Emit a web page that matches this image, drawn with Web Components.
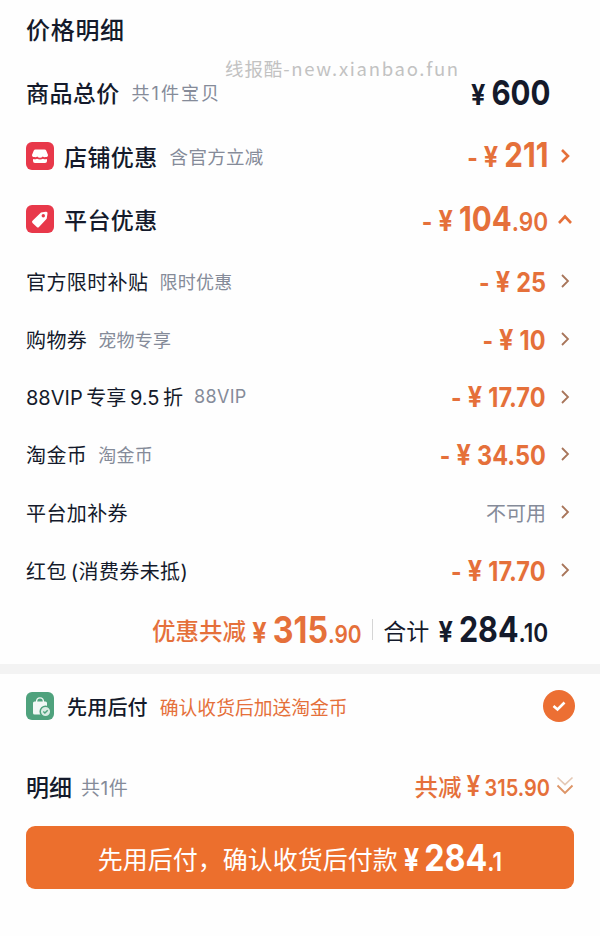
<!DOCTYPE html>
<html lang="zh">
<head>
<meta charset="utf-8">
<title>价格明细</title>
<style>
	html, body { margin: 0; background: #fefefe; }
	body { width: 600px; height: 936px; overflow: hidden; font-family: Inter, "Noto Sans CJK SC", sans-serif; color: #141a2b; position: relative; }
</style>
</head>
<body>
<price-panel>
	<section-title>价格明细</section-title>

	<price-row h="63" size="23" weight="500" note-size="18" lift="2" note-gap="12">
		商品总价<span slot="note" style="letter-spacing:2px">共1件宝贝</span>
		<money-amount slot="value" int="600" size="34" color="#141a2b" style="margin:3px -2px 0 0"></money-amount>
		<span slot="arrow"></span>
	</price-row>

	<price-row h="64" size="23" weight="500" note-size="18.5" note-gap="12">
		<app-icon slot="icon" name="shop"></app-icon>
		店铺优惠<span slot="note">含官方立减</span>
		<money-amount slot="value" sign int="211" size="34" style="margin-top:-3px"></money-amount>
		<chevron-icon slot="arrow" dir="right" strong></chevron-icon>
	</price-row>

	<price-row h="64" size="23" weight="500" lift="2">
		<app-icon slot="icon" name="tag"></app-icon>
		平台优惠
		<money-amount slot="value" sign int="104" dec=".90" size="34"></money-amount>
		<chevron-icon slot="arrow" dir="up" strong></chevron-icon>
	</price-row>

	<price-row h="58">
		官方限时补贴<span slot="note">限时优惠</span>
		<money-amount slot="value" sign int="25" size="27" style="margin-right:2px"></money-amount>
		<chevron-icon slot="arrow" dir="right"></chevron-icon>
	</price-row>
	<price-row h="58">
		购物券<span slot="note">宠物专享</span>
		<money-amount slot="value" sign int="10" size="27" style="margin-right:2px"></money-amount>
		<chevron-icon slot="arrow" dir="right"></chevron-icon>
	</price-row>
	<price-row h="57" tight>
		88VIP 专享 9.5 折<span slot="note">88VIP</span>
		<money-amount slot="value" sign int="17.70" size="27" style="margin-right:2px"></money-amount>
		<chevron-icon slot="arrow" dir="right"></chevron-icon>
	</price-row>
	<price-row h="58">
		淘金币<span slot="note">淘金币</span>
		<money-amount slot="value" sign int="34.50" size="27" style="margin-right:2px"></money-amount>
		<chevron-icon slot="arrow" dir="right"></chevron-icon>
	</price-row>
	<price-row h="58">
		平台加补券
		<span slot="value" style="color:#858b99;font-size:20px;margin-right:2px">不可用</span>
		<chevron-icon slot="arrow" dir="right"></chevron-icon>
	</price-row>
	<price-row h="58">
		红包 (消费券未抵)
		<money-amount slot="value" sign int="17.70" size="27" style="margin-right:2px"></money-amount>
		<chevron-icon slot="arrow" dir="right"></chevron-icon>
	</price-row>

	<total-bar>
		<money-amount slot="saved" int="315" dec=".90" dec-size="24" size="37"></money-amount>
		<money-amount slot="total" int="284" dec=".10" size="35" color="#141a2b"></money-amount>
	</total-bar>

	<pay-later-row></pay-later-row>

	<detail-summary>
		<money-amount int="315.90" size="23" yen-size="28" gap="5" weight="600"></money-amount>
	</detail-summary>

	<pay-button><money-amount int="284" dec=".1" size="37" yen-size="31" gap="6" color="#fff"></money-amount></pay-button>
</price-panel>
<water-mark>线报酷<span style="letter-spacing:1.7px">-new.xianbao.fun</span></water-mark>

<script>
const NARROW = 0.87;

function openShadow(el, html) {
	el.attachShadow({ mode: 'open' }).innerHTML = html;
}

class PricePanel extends HTMLElement {
	constructor() {
		super();
		openShadow(this, `<style>:host { display: flex; flex-direction: column; height: 936px; }</style><slot></slot>`);
	}
}

class SectionTitle extends HTMLElement {
	constructor() {
		super();
		openShadow(this, `<style>
			:host { display: flex; align-items: center; height: 61px; box-sizing: border-box; padding: 0 0 5px 26px; font-size: 24px; font-weight: 500; letter-spacing: .7px; }
		</style><slot></slot>`);
	}
}

class PriceRow extends HTMLElement {
	constructor() {
		super();
		const h = this.getAttribute('h') || 58;
		const size = this.getAttribute('size') || 20;
		const weight = this.getAttribute('weight') || 400;
		const noteSize = this.getAttribute('note-size') || 18;
		const noteGap = this.getAttribute('note-gap') || 11;
		const lift = this.getAttribute('lift') || 0;
		const spacing = this.hasAttribute('tight') ? 0 : 0.4;
		openShadow(this, `<style>
			:host { display: flex; align-items: center; height: ${h}px; padding: 0 26px ${lift}px; box-sizing: border-box; }
			.label { font-size: ${size}px; font-weight: ${weight}; letter-spacing: ${spacing}px; word-spacing: -2px; white-space: nowrap; }
			.note { font-size: ${noteSize}px; color: #858b99; margin-left: ${noteGap}px; letter-spacing: .3px; white-space: nowrap; }
			.value { margin-left: auto; display: flex; }
			.arrow { width: 26px; display: flex; justify-content: flex-end; }
			::slotted([slot=icon]) { margin-right: 10px; }
		</style>
		<slot name="icon"></slot>
		<span class="label"><slot></slot></span>
		<span class="note"><slot name="note"></slot></span>
		<span class="value"><slot name="value"></slot></span>
		<span class="arrow"><slot name="arrow"></slot></span>`);
	}
}

// digits are squeezed horizontally, the reference uses a narrow DIN-like face
class MoneyAmount extends HTMLElement {
	constructor() {
		super();
		const size = +this.getAttribute('size') || 26;
		const yen = +this.getAttribute('yen-size') || 29;
		const gap = +this.getAttribute('gap') || 7;
		const decSize = +this.getAttribute('dec-size') || 26;
		const weight = this.getAttribute('weight') || 700;
		const color = this.getAttribute('color') || '#e5703a';
		const sign = this.hasAttribute('sign') ? '<span class="sign">-</span>' : '';
		const dec = this.getAttribute('dec');
		openShadow(this, `<style>
			:host { display: inline-flex; color: ${color}; font-family: Inter, sans-serif; font-weight: ${weight}; white-space: nowrap; line-height: 1; }
			.inner { display: inline-flex; align-items: baseline; transform-origin: right center; }
			.sign { font-size: 26px; margin-right: 7px; }
			.yen { font-size: ${yen}px; margin-right: ${gap}px; }
			.int { font-size: ${size}px; }
			.dec { font-size: ${decSize}px; font-weight: 600; }
		</style><span class="inner">${sign}<span class="yen">¥</span><span class="int">${this.getAttribute('int')}</span>${dec ? `<span class="dec">${dec}</span>` : ''}</span>`);
	}

	connectedCallback() {
		const inner = this.shadowRoot.querySelector('.inner');
		const w = inner.getBoundingClientRect().width;
		inner.style.transform = `scaleX(${NARROW})`;
		inner.style.marginLeft = `${-w * (1 - NARROW)}px`;
	}
}

class ChevronIcon extends HTMLElement {
	constructor() {
		super();
		const dir = this.getAttribute('dir');
		const strong = this.hasAttribute('strong');
		const color = strong ? '#e5703a' : '#a8755a';
		const sw = strong ? 2.6 : 1.8;
		const svg = dir === 'up'
			? `<svg width="16" height="12" viewBox="0 0 16 12"><path d="M2 10 8 3.500 14 10" fill="none" stroke="${color}" stroke-width="${sw}"/></svg>`
			: `<svg width="10" height="16" viewBox="0 0 10 16"><path d="M2 2 8 8 2 14" fill="none" stroke="${color}" stroke-width="${sw}"/></svg>`;
		openShadow(this, `<style>:host { display: flex; margin-right: ${dir === 'up' ? 1 : 4}px; }</style>${svg}`);
	}
}

const ICONS = {
	shop: `<path d="M9.500 7.500h9a2 2 0 0 1 1.800 1.200L22 13a2 2 0 0 1-2.500 2 3 3 0 0 1-2.800-.6 3.500 3.500 0 0 1-5.400 0 3 3 0 0 1-2.800.6 2 2 0 0 1-2.500-2L7.700 8.700a2 2 0 0 1 1.800-1.200z" fill="#fff"/>
		<path d="M7 17c1.200.5 2.800.4 4-.2 1.800.9 4.200.9 6 0 1.200.6 2.800.7 4 .2v2a2 2 0 0 1-2 2H9a2 2 0 0 1-2-2z" fill="#fff"/>`,
	tag: `<path d="M15 7.500l4.800-.8a1.500 1.500 0 0 1 1.700 1.700l-.8 5.300-7.700 8.300a1.600 1.600 0 0 1-2.200 0l-4.300-4a1.600 1.600 0 0 1 0-2.200z" fill="#fff"/>
		<circle cx="17.300" cy="10.800" r="1.700" fill="#e8384a"/>`,
	bag: `<path d="M10.500 10c0-5.500 7-5.500 7 0" fill="none" stroke="#fff" stroke-opacity=".9" stroke-width="1.400"/>
		<path d="M8.500 9.500h11a1.500 1.500 0 0 1 1.500 1.500v10a1.500 1.500 0 0 1-1.500 1.500h-11a1.500 1.500 0 0 1-1.500-1.500V11a1.500 1.500 0 0 1 1.500-1.500z" fill="#fff" fill-opacity=".92"/>
		<circle cx="19.500" cy="19.500" r="5.300" fill="#d9ece3" stroke="#4fa27d" stroke-width="1.500"/>
		<path d="M17.300 19.500l1.600 1.600 2.800-2.900" fill="none" stroke="#4fa27d" stroke-width="1.400"/>`
};

class AppIcon extends HTMLElement {
	constructor() {
		super();
		const name = this.getAttribute('name');
		const bg = name === 'bag' ? '#4fa27d' : '#e8384a';
		openShadow(this, `<style>
			:host { display: block; width: 28px; height: 28px; border-radius: 6px; background: ${bg}; flex: none; }
			svg { display: block; }
		</style><svg width="28" height="28" viewBox="0 0 28 28">${ICONS[name]}</svg>`);
	}
}

class TotalBar extends HTMLElement {
	constructor() {
		super();
		openShadow(this, `<style>
			:host { display: flex; align-items: center; justify-content: flex-end; height: 61px; padding-right: 52px; margin-bottom: 4px; white-space: nowrap; }
			.saved { color: #e5703a; font-size: 23.500px; font-weight: 500; margin-right: 6px; }
			.sep { width: 1px; height: 21px; background: #d5d5d5; margin: 0 10px 0 11px; }
			.sum { font-size: 23px; margin-right: 9px; }
		</style>
		<span class="saved">优惠共减</span><slot name="saved"></slot>
		<span class="sep"></span>
		<span class="sum">合计</span><slot name="total"></slot>`);
	}
}

class PayLaterRow extends HTMLElement {
	constructor() {
		super();
		openShadow(this, `<style>
			:host { display: flex; align-items: center; height: 64px; padding: 0 25px 0 26px; border-top: 10px solid #f3f3f3; white-space: nowrap; }
			.name { font-size: 20px; font-weight: 500; margin-left: 13px; letter-spacing: .2px; }
			.desc { font-size: 18.800px; color: #e5703a; margin-left: 12px; }
			.check { margin-left: auto; width: 32px; height: 32px; border-radius: 50%; background: #ec6f33; display: flex; align-items: center; justify-content: center; }
		</style>
		<app-icon name="bag"></app-icon>
		<span class="name">先用后付</span>
		<span class="desc">确认收货后加送淘金币</span>
		<span class="check"><svg width="16" height="12" viewBox="0 0 16 12"><path d="M2.500 6 6.500 9.500 13.500 2.500" fill="none" stroke="#fff" stroke-width="2.600"/></svg></span>`);
	}
}

class DetailSummary extends HTMLElement {
	constructor() {
		super();
		openShadow(this, `<style>
			:host { display: flex; align-items: center; height: 64px; margin-top: 16px; padding: 0 26px; white-space: nowrap; }
			.name { font-size: 23px; font-weight: 500; }
			.count { font-size: 19px; color: #858b99; margin-left: 9px; letter-spacing: .5px; }
			.saved { margin-left: auto; color: #e5703a; font-size: 23.500px; font-weight: 500; margin-right: 5px; }
			svg { display: block; margin-left: 6px; }
		</style>
		<span class="name">明细</span><span class="count">共1件</span>
		<span class="saved">共减</span><slot></slot>
		<svg width="18" height="20" viewBox="0 0 18 20"><path d="M1.500 1.500 9 8.500 16.500 1.500" fill="none" stroke="#e4c8b4" stroke-width="1.700"/><path d="M1.500 9.500 9 17 16.500 9.500" fill="none" stroke="#dd9466" stroke-width="1.900"/></svg>`);
	}
}

class PayButton extends HTMLElement {
	constructor() {
		super();
		openShadow(this, `<style>
			:host { display: flex; align-items: center; justify-content: center; height: 63px; margin: 8px 26px 0; background: #ec6f2d; border-radius: 9px; color: #fff; font-size: 25px; font-weight: 400; white-space: nowrap; }
			span { margin-right: 6px; }
		</style><span>先用后付，确认收货后付款</span><slot></slot>`);
	}
}

class WaterMark extends HTMLElement {
	constructor() {
		super();
		openShadow(this, `<style>
			:host { position: absolute; left: 225px; top: 54px; font-size: 18.500px; line-height: 28px; color: #c2c2c2; letter-spacing: .9px; white-space: nowrap; font-family: "Noto Sans CJK SC", sans-serif; }
		</style><slot></slot>`);
	}
}

customElements.define('price-panel', PricePanel);
customElements.define('section-title', SectionTitle);
customElements.define('price-row', PriceRow);
customElements.define('money-amount', MoneyAmount);
customElements.define('chevron-icon', ChevronIcon);
customElements.define('app-icon', AppIcon);
customElements.define('total-bar', TotalBar);
customElements.define('pay-later-row', PayLaterRow);
customElements.define('detail-summary', DetailSummary);
customElements.define('pay-button', PayButton);
customElements.define('water-mark', WaterMark);
</script>
</body>
</html>
